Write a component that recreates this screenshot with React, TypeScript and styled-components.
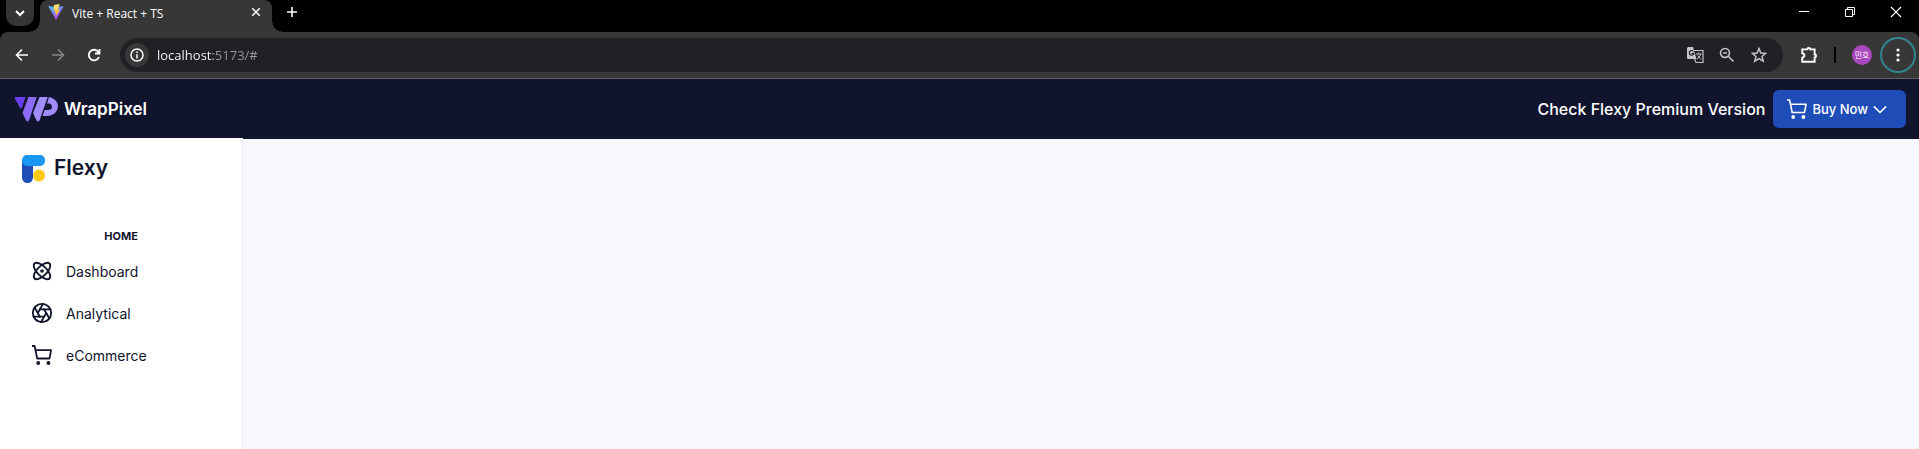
import React from 'react';
import styled, { createGlobalStyle } from 'styled-components';
import { Atom, Aperture } from 'lucide-react';

const uiFont = '"Open Sans", "Noto Sans CJK KR", sans-serif';
const appFont = 'Inter, "Liberation Sans", sans-serif';

const GlobalStyle = createGlobalStyle`
  * { box-sizing: border-box; }
  html, body { margin: 0; height: 100%; }
  #root { height: 100%; }
  button, input { font: inherit; color: inherit; border: 0; padding: 0; margin: 0; background: none; }
  button { cursor: pointer; }
  svg { display: block; flex: none; }
`;

const Page = styled.div`
  display: flex;
  flex-direction: column;
  min-height: 100%;
  font-family: ${appFont};
  color: #11142d;
`;

const Chrome = styled.div`
  background: #000;
  color: #fff;
  font-family: ${uiFont};
  font-size: 12px;
`;

const TabStrip = styled.div`
  display: flex;
  height: 32px;
`;

const TabSearch = styled.button`
  display: flex;
  align-items: center;
  justify-content: center;
  width: 28px;
  height: 26px;
  margin-left: 6px;
  border-radius: 0 0 10px 10px;
  background: #353535;
`;

const Tab = styled.div`
  position: relative;
  display: flex;
  align-items: center;
  gap: 8px;
  width: 232px;
  margin-left: 6px;
  padding: 0 10px 8px 8px;
  border-radius: 8px 8px 0 0;
  background: #373737;
  &::before, &::after {
    content: '';
    position: absolute;
    bottom: 0;
    width: 10px;
    height: 10px;
  }
  &::before { right: 100%; background: radial-gradient(circle at 0 0, transparent 9px, #373737 10px); }
  &::after { left: 100%; background: radial-gradient(circle at 100% 0, transparent 9px, #373737 10px); }
`;

const TabTitle = styled.span`
  flex: 1;
  padding-top: 4px;
  line-height: 16px;
  white-space: nowrap;
`;

const NewTab = styled.button`
  display: flex;
  align-items: center;
  justify-content: center;
  width: 28px;
  height: 24px;
  margin-left: 6px;
`;

const WindowControls = styled.div`
  display: flex;
  height: 24px;
  margin-left: auto;
`;

const WindowButton = styled.button`
  display: flex;
  align-items: center;
  justify-content: center;
  width: 46px;
`;

const Toolbar = styled.div`
  display: flex;
  align-items: center;
  height: 47px;
  padding: 0 3px 0 4px;
  border-radius: 8px 8px 0 0;
  border-bottom: 1px solid #606060;
  background: #373737;
`;

const ToolButton = styled.button<{ $dim?: boolean }>`
  display: flex;
  align-items: center;
  justify-content: center;
  width: 36px;
  height: 34px;
  color: ${(p) => (p.$dim ? '#858585' : '#fff')};
`;

const AddressBar = styled.form`
  display: flex;
  flex: 1;
  align-items: center;
  height: 34px;
  margin: 0 8px;
  padding: 0 8px 0 5px;
  border-radius: 17px;
  background: #202124;
`;

const SiteInfo = styled.button`
  display: flex;
  align-items: center;
  justify-content: center;
  width: 24px;
  height: 24px;
  margin-right: 8px;
  border-radius: 50%;
  background: #373737;
`;

const Address = styled.input`
  flex: 1;
  min-width: 0;
  height: 24px;
  font-size: 13px;
  color: transparent;
  background: linear-gradient(90deg, #fff 56px, #989a9d 56px);
  -webkit-background-clip: text;
  background-clip: text;
  outline: none;
`;

const BarButton = styled(ToolButton)`
  width: 32px;
  color: #c4c5c7;
`;

const Divider = styled.span`
  width: 2px;
  height: 16px;
  margin: 0 16px 0 7px;
  background: #000;
`;

const Avatar = styled.button`
  width: 20px;
  height: 20px;
  border-radius: 50%;
  background: #ab47bc;
  font-size: 8px;
  line-height: 20px;
  white-space: nowrap;
`;

const MenuButton = styled(ToolButton)`
  margin-left: 8px;
  height: 36px;
  border: 2px solid #33858f;
  border-radius: 50%;
`;

const TopBar = styled.header`
  display: flex;
  align-items: center;
  justify-content: space-between;
  height: 60px;
  padding: 0 13px 0 14px;
  background: #11142d;
  color: #fff;
`;

const Brand = styled.a`
  display: flex;
  align-items: center;
  gap: 5px;
  color: inherit;
  text-decoration: none;
`;

const BrandName = styled.span`
  font-size: 17px;
  font-weight: 600;
  line-height: 24px;
`;

const Promo = styled.div`
  display: flex;
  align-items: center;
  gap: 8px;
  font-size: 16px;
  font-weight: 500;
`;

const BuyButton = styled.button`
  display: flex;
  align-items: center;
  gap: 5px;
  height: 38px;
  padding: 0 19px 0 14px;
  border-radius: 6px;
  background: #1e4db7;
  font-size: 13px;
  font-weight: 500;
`;

const Body = styled.div`
  display: flex;
  flex: 1;
  background: #f6f8fd;
`;

const Sidebar = styled.aside`
  width: 243px;
  margin-top: -1px;
  border-right: 1px solid #e8eaf0;
  background: #fff;
`;

const Logo = styled.a`
  display: flex;
  align-items: center;
  gap: 8px;
  padding: 17px 22px 0;
  color: inherit;
  font-size: 21px;
  font-weight: 600;
  line-height: 28px;
  text-decoration: none;
`;

const LogoText = styled.span`
  padding-bottom: 2px;
  line-height: 26px;
`;

const Caption = styled.h2`
  margin: 45px 0 0;
  font-size: 11px;
  font-weight: 700;
  line-height: 16px;
  text-align: center;
`;

const Menu = styled.ul`
  margin: 6px 0 0;
  padding: 0;
  list-style: none;
`;

const MenuLink = styled.a`
  display: flex;
  align-items: center;
  gap: 13px;
  height: 42px;
  padding: 0 31px;
  color: inherit;
  font-size: 14px;
  text-decoration: none;
`;

const IconSlot = styled.span`
  display: flex;
  justify-content: center;
  width: 22px;
`;

const Line = ({ d, size = 16, width = 1.6 }: { d: string; size?: number; width?: number }) => (
  <svg width={size} height={size} viewBox="0 0 16 16" fill="none" stroke="currentColor" strokeWidth={width}>
    <path d={d} />
  </svg>
);

const Cart = ({ width = 1.6 }: { width?: number }) => (
  <svg width="20" height="20" viewBox="0 0 20 20" fill="none" stroke="currentColor" strokeWidth={width}>
    <path d="M0 1h2.600l.9 4.200h15.600l-1.600 8.300H5.200L3.500 5.200" strokeLinejoin="round" />
    <circle cx="6.200" cy="18" r="1.900" fill="currentColor" stroke="none" />
    <circle cx="16.400" cy="18" r="1.900" fill="currentColor" stroke="none" />
  </svg>
);

const ViteLogo = () => (
  <svg width="16" height="16" viewBox="0 0 16 16">
    <defs>
      <linearGradient id="vite" x1="0" y1="0" x2=".6" y2="1">
        <stop stopColor="#41d1ff" />
        <stop offset="1" stopColor="#bd34fe" />
      </linearGradient>
      <linearGradient id="bolt" x1="0" y1="0" x2="0" y2="1">
        <stop stopColor="#ffea83" />
        <stop offset="1" stopColor="#ffa800" />
      </linearGradient>
    </defs>
    <path d="M.3 2 8 3.2 15.7 2 8 16z" fill="url(#vite)" />
    <path d="M11.5 0 6 1.1l-.4 6 1.7-.3-.5 2.4 1.3-.3-.6 3.8L11.8 6l-1.8.3L11.5 0z" fill="url(#bolt)" />
  </svg>
);

const WrapPixelLogo = () => (
  <svg width="45" height="26" viewBox="0 0 45 26">
    <path d="M1.5 1H11.5L8 11.5q-1 2-2.200 0L.8 2.500Q.3 1 1.500 1z" fill="#6a3ff0" />
    <path d="M14.500 1h8.200L15.200 24q-1.700 3-3.400 0L8.500 17z" fill="#8e6bf7" />
    <path d="M25.500 1h8.200L25.700 24q-1.700 3-3.400 0L19 17z" fill="#a08cfb" />
    <path d="M35 1C40 2 44 5.500 44 10.500S39 20 33 20h-4.500l2.200-6H34c5 0 5-5.500 1.500-6.500H33z" fill="#a08cfb" />
  </svg>
);

const FlexyLogo = () => (
  <svg width="24" height="28" viewBox="0 0 24 28">
    <path d="M0 5h11v17.500a5.500 5.500 0 0 1-11 0z" fill="#1e4db7" />
    <rect width="23" height="11" rx="5" fill="#1a97f5" />
    <circle cx="17" cy="20.500" r="6" fill="#ffc811" />
  </svg>
);

const ITEMS = [
  { label: 'Dashboard', icon: <Atom size={22} strokeWidth={2} /> },
  { label: 'Analytical', icon: <Aperture size={22} strokeWidth={2} /> },
  { label: 'eCommerce', icon: <Cart width={1.8} /> },
];

export default function App() {
  return (
    <Page>
      <GlobalStyle />
      <Chrome>
        <TabStrip>
          <TabSearch aria-label="Search tabs"><Line d="M4 6 8 10 12 6" width={2} /></TabSearch>
          <Tab>
            <ViteLogo />
            <TabTitle>Vite + React + TS</TabTitle>
            <button aria-label="Close tab"><Line size={12} d="M3 3l10 10M13 3 3 13" width={2} /></button>
          </Tab>
          <NewTab aria-label="New tab"><Line d="M8 3v10M3 8h10" width={1.6} /></NewTab>
          <WindowControls>
            <WindowButton aria-label="Minimize"><Line d="M3 7.500h10" width={1} /></WindowButton>
            <WindowButton aria-label="Restore"><Line d="M3.500 5.500h7v7h-7zM5.500 5V3.500h7v7H11" width={1} /></WindowButton>
            <WindowButton aria-label="Close window"><Line d="M3 3l10 10M13 3 3 13" width={1.2} /></WindowButton>
          </WindowControls>
        </TabStrip>
        <Toolbar>
          <ToolButton aria-label="Back"><Line d="M14 8H3M8 2.500 2.500 8 8 13.500" /></ToolButton>
          <ToolButton aria-label="Forward" $dim><Line d="M2 8h11M8 2.500 13.500 8 8 13.500" /></ToolButton>
          <ToolButton aria-label="Reload"><Line d="M13 10a5.300 5.300 0 1 1-.6-5L13.500 6.200M13.500 2v4.500H9" width={1.8} /></ToolButton>
          <AddressBar onSubmit={(e) => e.preventDefault()}>
            <SiteInfo type="button" aria-label="Site information">
              <svg width="14" height="14" viewBox="0 0 14 14" fill="none" stroke="currentColor" strokeWidth="1.500">
                <circle cx="7" cy="7" r="6" /><path d="M7 6.200V10.500M7 3.500v1.500" />
              </svg>
            </SiteInfo>
            <Address aria-label="Address" defaultValue="localhost:5173/#" spellCheck={false} />
            <BarButton type="button" aria-label="Translate">
              <svg width="17" height="17" viewBox="0 0 17 17" fill="none" stroke="currentColor">
                <path d="M7 3.500h9v12H9L7.500 12" strokeWidth="1.200" />
                <path d="M1.500 0H6l3.500 12h-8A1.500 1.500 0 0 1 0 10.500v-9A1.500 1.500 0 0 1 1.500 0z" fill="currentColor" stroke="none" />
                <path d="M6.500 4.500a2.300 2.300 0 1 0 .3 2H4.500" stroke="#202124" strokeWidth="1.200" />
                <path d="M9 7h5.500M11.700 5.500V7M13.500 7c-.5 2.500-2 4-3.500 5M10.500 8.500l3.500 4" />
              </svg>
            </BarButton>
            <BarButton type="button" aria-label="Zoom"><Line d="M10.500 6A4.500 4.500 0 1 1 1.500 6a4.500 4.500 0 0 1 9 0zM9.500 9.500l5 5M4 6h4" /></BarButton>
            <BarButton type="button" aria-label="Bookmark"><Line d="M8 1.500l1.800 4.500 4.900.4-3.700 3.100 1.200 4.700L8 11.600l-4.200 2.600L5 9.500 1.300 6.400 6.200 6z" width={1.5} /></BarButton>
          </AddressBar>
          <ToolButton aria-label="Extensions">
            <Line size={18} d="M2 3h4.500a1.200 1.200 0 0 1 2.600 0H13v4.500a1.200 1.200 0 0 1 0 2.600V14H2v-3.500c2.500-.5 2.500-3.500 0-4z" width={1.7} />
          </ToolButton>
          <Divider />
          <Avatar aria-label="Profile">민호</Avatar>
          <MenuButton aria-label="Menu">
            <svg width="4" height="16" viewBox="0 0 4 16" fill="currentColor">
              <circle cx="2" cy="3" r="1.600" /><circle cx="2" cy="8" r="1.600" /><circle cx="2" cy="13" r="1.600" />
            </svg>
          </MenuButton>
        </Toolbar>
      </Chrome>
      <TopBar>
        <Brand href="#"><WrapPixelLogo /><BrandName>WrapPixel</BrandName></Brand>
        <Promo>
          <span>Check Flexy Premium Version</span>
          <BuyButton><Cart />Buy Now<Line d="M1 5l7 7 7-7" size={14} width={1.8} /></BuyButton>
        </Promo>
      </TopBar>
      <Body>
        <Sidebar>
          <Logo href="#"><FlexyLogo /><LogoText>Flexy</LogoText></Logo>
          <nav aria-label="Main">
            <Caption>HOME</Caption>
            <Menu>
              {ITEMS.map((item) => (
                <li key={item.label}>
                  <MenuLink href="#"><IconSlot>{item.icon}</IconSlot>{item.label}</MenuLink>
                </li>
              ))}
            </Menu>
          </nav>
        </Sidebar>
        <main />
      </Body>
    </Page>
  );
}
